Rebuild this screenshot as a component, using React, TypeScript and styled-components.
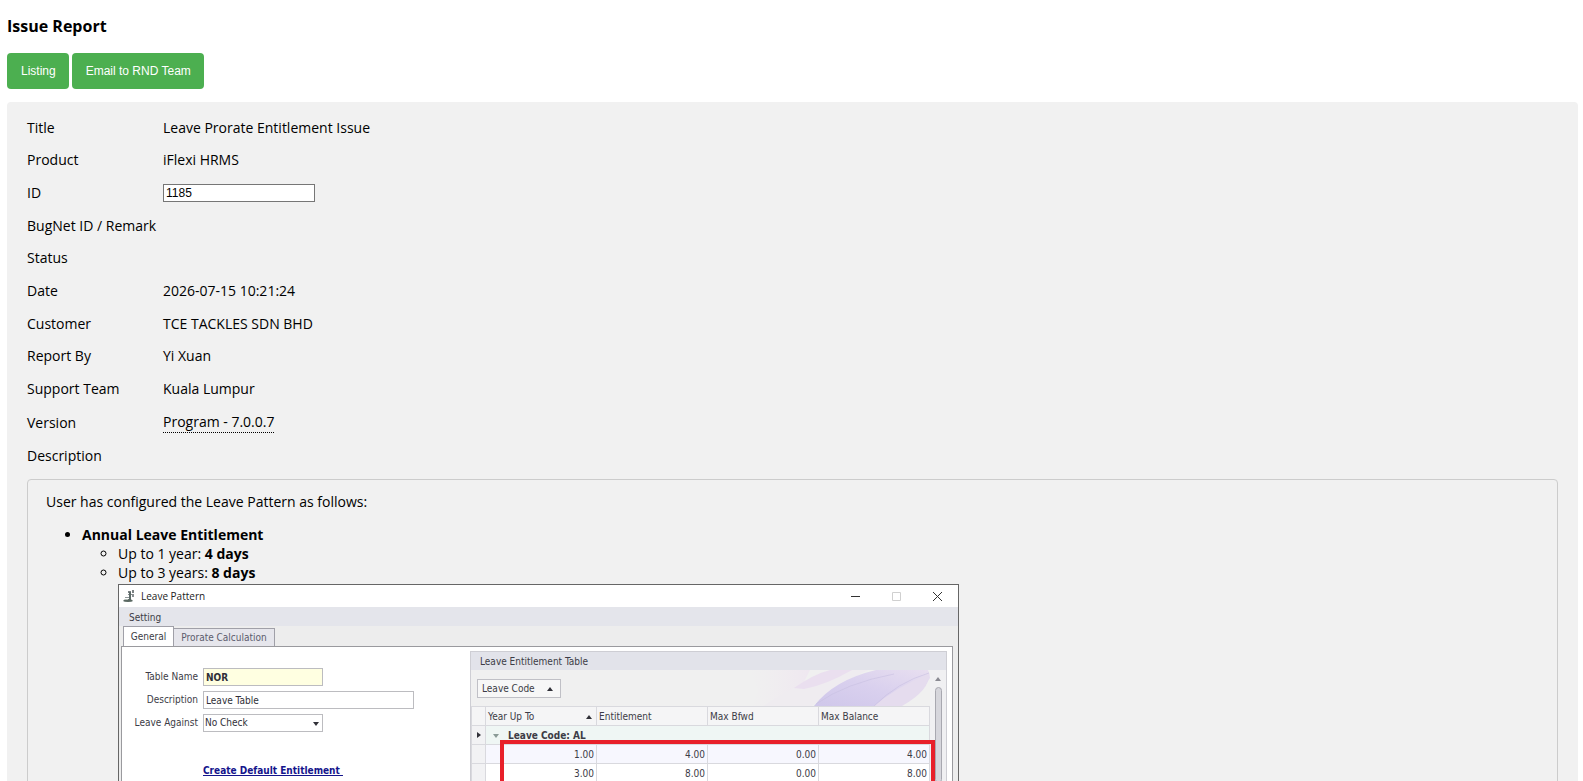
import React from "react";
import styled, { createGlobalStyle } from "styled-components";

const GlobalStyle = createGlobalStyle`
  * { box-sizing: border-box; }
  html { scrollbar-width: none; }
  body {
    margin: 0;
    background: #fff;
    color: #000;
    font: 14px/19px "Open Sans", sans-serif;
  }
`;

const Page = styled.main`
  padding: 15px 5px 20px 7px;
`;

const Heading = styled.h1`
  margin: 0 0 16px;
  font-size: 16px;
  line-height: 22px;
`;

const Toolbar = styled.div`
  display: flex;
  gap: 3px;
  margin-bottom: 13px;
`;

const ActionButton = styled.button`
  height: 36px;
  padding: 0 13px 0 14px;
  border: 0;
  border-radius: 4px;
  background: #4caf50;
  color: #fff;
  font: 12px "Liberation Sans", Arial, sans-serif;
  cursor: pointer;
`;

const Panel = styled.section`
  padding: 9px 20px 20px;
  border-radius: 4px;
  background: #f1f1f1;
`;

const Details = styled.dl`
  display: grid;
  grid-template-columns: 136px 1fr;
  align-items: center;
  align-content: stretch;
  min-height: 361px;
  margin: 0 0 7px;
`;

const Term = styled.dt`
  white-space: nowrap;
`;

const Value = styled.dd`
  display: flex;
  margin: 0;
`;

const IdInput = styled.input`
  width: 152px;
  height: 18px;
  padding: 0 2px;
  border: 1px solid #767676;
  background: #fff;
  color: #000;
  font: 12px "Liberation Sans", Arial, sans-serif;
`;

const Version = styled.abbr`
  padding-bottom: 1px;
  border-bottom: 1px dotted #000;
  text-decoration: none;
`;

const Description = styled.article`
  padding: 12px 18px;
  border: 1px solid #ccc;
  border-radius: 4px;

  p { margin: 0 0 14px; }
  ul { margin: 0; padding-left: 36px; }
`;

/* Leave Pattern window */

const Window = styled.figure`
  width: 841px;
  margin: 2px 0 0;
  border: 1px solid #666;
  background: #ededed;
  color: #3c3c46;
  font: 10px/14px "DejaVu Sans Condensed", "DejaVu Sans", sans-serif;
`;

const TitleBar = styled.header`
  display: flex;
  align-items: center;
  gap: 6px;
  height: 22px;
  padding: 0 14px 0 4px;
  background: #fff;
  color: #222;
  font: 10px/16px "Open Sans", sans-serif;
`;

const WindowTitle = styled.span`
  flex: 1;
`;

const WindowButtons = styled.svg`
  width: 94px;
  height: 12px;
`;

const MenuBar = styled.nav`
  display: flex;
  align-items: center;
  height: 19px;
  padding: 2px 10px 0;
  background: #e4e5eb;
`;

const TabStrip = styled.div`
  display: flex;
  align-items: flex-end;
  height: 20px;
  padding-left: 4px;
`;

const Tab = styled.button<{ $active?: boolean }>`
  height: ${(p) => (p.$active ? 20 : 18)}px;
  width: ${(p) => (p.$active ? 51 : 101)}px;
  padding: 1px 0 0;
  border: 1px solid #a0a0a8;
  border-left-width: ${(p) => (p.$active ? 1 : 0)}px;
  border-bottom: 0;
  background: ${(p) => (p.$active ? "#fff" : "#e6e6ec")};
  color: ${(p) => (p.$active ? "#3c3c46" : "#5c5c6c")};
  font: inherit;
`;

const TabPage = styled.div`
  display: flex;
  min-height: 300px;
  margin: 0 5px 5px 2px;
  padding: 4px 5px 8px 0;
  border: 1px solid #9a9a9e;
  background: #fff;
`;

const Form = styled.form`
  display: grid;
  grid-template-columns: 76px 211px;
  grid-auto-rows: 18px;
  column-gap: 5px;
  row-gap: 5px;
  align-content: start;
  align-items: center;
  width: 348px;
  padding: 17px 0 0;

  label { text-align: right; white-space: nowrap; }
`;

const Field = styled.input<{ $key?: boolean }>`
  width: ${(p) => (p.$key ? 120 : 211)}px;
  height: 18px;
  padding: 0 2px;
  border: 1px solid #bcbcc0;
  background: ${(p) => (p.$key ? "#ffffe1" : "#fff")};
  color: #303038;
  font: inherit;
  font-weight: ${(p) => (p.$key ? "bold" : "normal")};
`;

const SelectWrap = styled.span`
  position: relative;
  width: 120px;
  height: 18px;

  svg { position: absolute; right: 4px; top: 7px; pointer-events: none; }
`;

const Choice = styled.select`
  display: block;
  width: 100%;
  height: 18px;
  padding: 0 1px;
  border: 1px solid #bcbcc0;
  border-radius: 0;
  appearance: none;
  background: #fff;
  color: #303038;
  font: inherit;
`;

const CreateLink = styled.a`
  grid-column: 2;
  align-self: start;
  margin-top: 27px;
  color: #14148c;
  font-weight: bold;
  white-space: pre;
`;

const Group = styled.section`
  flex: 1;
  min-width: 0;
  border: 1px solid #ceced4;
  background: #f0f0f0;
`;

const GroupTitle = styled.h2`
  height: 18px;
  margin: 0;
  padding: 1px 9px 0;
  background: #e2e3ea;
  font-size: 10px;
  font-weight: normal;
  line-height: 18px;
`;

const GroupBody = styled.div`
  display: flex;
`;

const GridArea = styled.div`
  position: relative;
  width: 459px;
`;

const GroupBar = styled.div`
  display: flex;
  justify-content: space-between;
  align-items: center;
  height: 36px;
  padding-left: 6px;
`;

const GroupChip = styled.button`
  display: flex;
  align-items: center;
  justify-content: space-between;
  width: 84px;
  height: 19px;
  padding: 1px 7px 0 4px;
  border: 1px solid #c0c0c6;
  background: #f7f7f7;
  color: inherit;
  font: inherit;
`;

const Grid = styled.table`
  width: 100%;
  border-collapse: collapse;
  table-layout: fixed;
  background: #fff;

  th, td { height: 19px; padding: 1px 2px 0; border: 1px solid #d9d9de; }
  th { background: #f5f5f6; font-weight: normal; text-align: left; }
  td { text-align: right; }
  th svg { float: right; margin: 4px 2px 0 0; }
  tbody tr:nth-child(even) td { background: #f7f7fe; }
  tbody tr td:first-child { background: #f2f2f4; padding: 0; text-align: center; }
`;

const GroupCell = styled.td`
  && { background: #eff6f4; text-align: left; font-weight: bold; padding: 1px 7px 0; }
  svg { margin-right: 9px; vertical-align: middle; }
`;

const Highlight = styled.div`
  position: absolute;
  left: 29px;
  right: -5px;
  top: 70px;
  height: 110px;
  border: 4px solid #e8202a;
`;

const ScrollBar = styled.div`
  display: flex;
  flex-direction: column;
  align-items: center;
  gap: 5px;
  flex: 1;
  padding-top: 6px;
  background: #f0f0f2;
`;

const Thumb = styled.div`
  flex: 1;
  width: 7px;
  border: 1px solid #a8a8b0;
  border-radius: 4px;
  background: #d6d6dc;
`;

const Triangle = ({ dir = "up", size = 6, color = "#303038" }: { dir?: "up" | "down" | "right"; size?: number; color?: string }) => (
  <svg width={size} height={size} viewBox="0 0 6 6" fill={color} aria-hidden="true">
    <path d={dir === "up" ? "M0 5L3 1L6 5Z" : dir === "down" ? "M0 1H6L3 5Z" : "M1 0L5 3L1 6Z"} />
  </svg>
);

const AppIcon = () => (
  <svg width="12" height="13" viewBox="0 0 12 13" aria-hidden="true">
    <path d="M5 1H8V3H5ZM9 0H11V3H9Z" fill="#7c8284" />
    <path d="M5 4H11V5H5ZM9 5H11V7H9Z" fill="#8a9092" />
    <path d="M6 2H8V10H6Z" fill="#5c6a68" />
    <path d="M2 7H6V8H2Z" fill="#90989a" />
    <path d="M0 11Q1 9 5 9Q9 9 10 11Q9 12 5 12Q1 12 0 11Z" fill="#5a6862" />
    <path d="M2 9H5V10H2Z" fill="#b4beb8" />
  </svg>
);

const Wallpaper = () => (
  <svg width="180" height="36" viewBox="0 0 180 36" aria-hidden="true">
    <defs>
      <linearGradient id="petal" x1="0" y1="1" x2="1" y2="0">
        <stop offset="0" stopColor="#cfc7ea" />
        <stop offset="0.5" stopColor="#d9d0ee" />
        <stop offset="1" stopColor="#e8dff0" />
      </linearGradient>
      <linearGradient id="blush" x1="0" x2="1">
        <stop offset="0" stopColor="#f0e8f0" stopOpacity="0" />
        <stop offset="1" stopColor="#eee4f0" />
      </linearGradient>
    </defs>
    <path d="M0 0L60 0L50 20L14 36H2L8 20Z" fill="url(#blush)" opacity=".7" />
    <path d="M14 36Q50 10 94 0H118Q82 18 62 36Z" fill="#efecf0" />
    <path d="M44 18Q64 4 80 0H102Q76 15 54 19Z" fill="#eadfef" />
    <path d="M64 36Q84 10 126 0H178Q180 4 180 8Q168 28 150 36Z" fill="url(#petal)" />
    <path d="M124 36Q146 17 179 4Q180 20 152 36Z" fill="#e5dcee" />
    <path d="M66 34Q96 13 144 4M124 36Q148 12 179 3" fill="none" stroke="#c8bfe0" strokeWidth=".6" />
  </svg>
);

const details: { label: string; value?: React.ReactNode }[] = [
  { label: "Title", value: "Leave Prorate Entitlement Issue" },
  { label: "Product", value: "iFlexi HRMS" },
  { label: "ID", value: <IdInput id="issue-id" defaultValue="1185" /> },
  { label: "BugNet ID / Remark" },
  { label: "Status" },
  { label: "Date", value: "2026-07-15 10:21:24" },
  { label: "Customer", value: "TCE TACKLES SDN BHD" },
  { label: "Report By", value: "Yi Xuan" },
  { label: "Support Team", value: "Kuala Lumpur" },
  { label: "Version", value: <Version>Program - 7.0.0.7</Version> },
  { label: "Description" },
];

const entitlements = [
  ["1.00", "4.00", "0.00", "4.00"],
  ["3.00", "8.00", "0.00", "8.00"],
];

const LeavePatternWindow = () => (
  <Window>
    <TitleBar>
      <AppIcon />
      <WindowTitle>Leave Pattern</WindowTitle>
      <WindowButtons viewBox="0 0 94 12" fill="none" aria-hidden="true">
        <path d="M1 6.5H10" stroke="#333" />
        <path d="M42.500 2.500H50.500V10.500H42.500Z" stroke="#d0d0d0" />
        <path d="M83 2L92 11M92 2L83 11" stroke="#333" />
      </WindowButtons>
    </TitleBar>
    <MenuBar>Setting</MenuBar>
    <TabStrip>
      <Tab $active>General</Tab>
      <Tab>Prorate Calculation</Tab>
    </TabStrip>
    <TabPage>
      <Form>
        <label htmlFor="table-name">Table Name</label>
        <Field id="table-name" $key defaultValue="NOR" />
        <label htmlFor="table-description">Description</label>
        <Field id="table-description" defaultValue="Leave Table" />
        <label htmlFor="leave-against">Leave Against</label>
        <SelectWrap>
          <Choice id="leave-against">
            <option>No Check</option>
          </Choice>
          <Triangle dir="down" />
        </SelectWrap>
        <CreateLink href="#create">{"Create Default Entitlement "}</CreateLink>
      </Form>
      <Group>
        <GroupTitle>Leave Entitlement Table</GroupTitle>
        <GroupBody>
          <GridArea>
            <GroupBar>
              <GroupChip>
                Leave Code <Triangle />
              </GroupChip>
              <Wallpaper />
            </GroupBar>
            <Grid>
              <colgroup>
                <col width="14" />
                <col span={4} />
              </colgroup>
              <thead>
                <tr>
                  <th />
                  <th>Year Up To <Triangle /></th>
                  <th>Entitlement</th>
                  <th>Max Bfwd</th>
                  <th>Max Balance</th>
                </tr>
              </thead>
              <tbody>
                <tr>
                  <td><Triangle dir="right" /></td>
                  <GroupCell colSpan={4}>
                    <Triangle dir="down" color="#8a9a96" />
                    Leave Code: AL
                  </GroupCell>
                </tr>
                {entitlements.map((row) => (
                  <tr key={row[0]}>
                    <td />
                    {row.map((cell, i) => (
                      <td key={i}>{cell}</td>
                    ))}
                  </tr>
                ))}
              </tbody>
            </Grid>
            <Highlight />
          </GridArea>
          <ScrollBar>
            <Triangle color="#8a8a92" />
            <Thumb />
          </ScrollBar>
        </GroupBody>
      </Group>
    </TabPage>
  </Window>
);

export default function App() {
  return (
    <>
      <GlobalStyle />
      <Page>
        <Heading>Issue Report</Heading>
        <Toolbar>
          <ActionButton>Listing</ActionButton>
          <ActionButton>Email to RND Team</ActionButton>
        </Toolbar>
        <Panel>
          <Details>
            {details.map(({ label, value }) => (
              <React.Fragment key={label}>
                <Term>{label === "ID" ? <label htmlFor="issue-id">ID</label> : label}</Term>
                <Value>{value}</Value>
              </React.Fragment>
            ))}
          </Details>
          <Description>
            <p>User has configured the Leave Pattern as follows:</p>
            <ul>
              <li>
                <strong>Annual Leave Entitlement</strong>
                <ul>
                  <li>Up to 1 year: <strong>4 days</strong></li>
                  <li>
                    Up to 3 years: <strong>8 days</strong>
                    <LeavePatternWindow />
                  </li>
                </ul>
              </li>
            </ul>
          </Description>
        </Panel>
      </Page>
    </>
  );
}
